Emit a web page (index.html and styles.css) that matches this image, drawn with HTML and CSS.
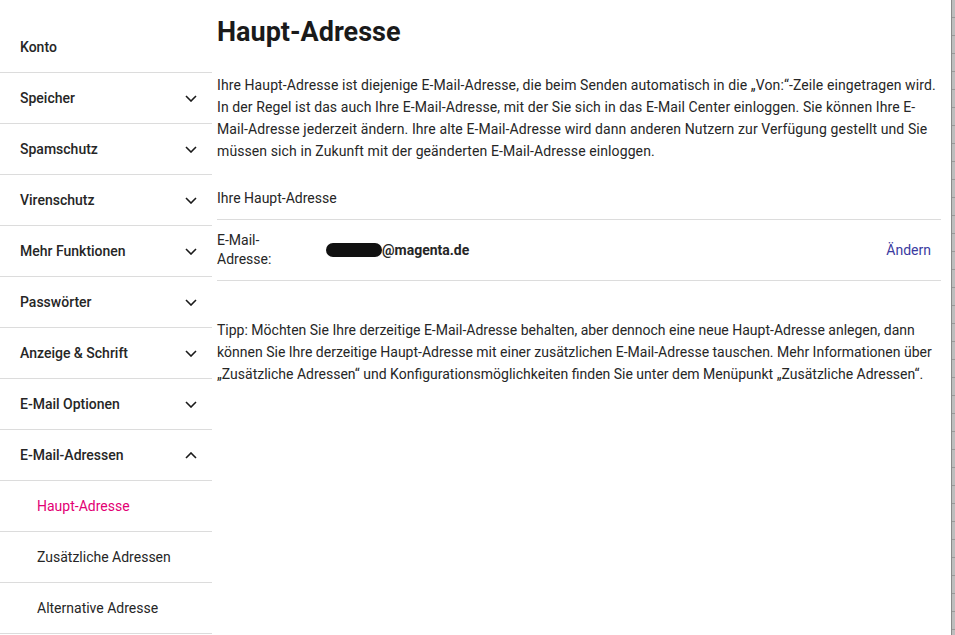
FILE: index.html
```html
<!DOCTYPE html>
<html lang="de">
<head>
    <meta charset="UTF-8">
    <meta name="viewport" content="width=device-width, initial-scale=1.0">
    <title>Haupt-Adresse</title>
    <link rel="stylesheet" href="styles.css">
</head>
<body>
    <div class="page">
        <nav class="sidebar">
            <div class="nav-item">Konto</div>
            <div class="nav-item">Speicher <svg class="chev" viewBox="0 0 12 7"><path d="M1 1l5 5 5-5"/></svg></div>
            <div class="nav-item">Spamschutz <svg class="chev" viewBox="0 0 12 7"><path d="M1 1l5 5 5-5"/></svg></div>
            <div class="nav-item">Virenschutz <svg class="chev" viewBox="0 0 12 7"><path d="M1 1l5 5 5-5"/></svg></div>
            <div class="nav-item">Mehr Funktionen <svg class="chev" viewBox="0 0 12 7"><path d="M1 1l5 5 5-5"/></svg></div>
            <div class="nav-item">Passwörter <svg class="chev" viewBox="0 0 12 7"><path d="M1 1l5 5 5-5"/></svg></div>
            <div class="nav-item">Anzeige &amp; Schrift <svg class="chev" viewBox="0 0 12 7"><path d="M1 1l5 5 5-5"/></svg></div>
            <div class="nav-item">E-Mail Optionen <svg class="chev" viewBox="0 0 12 7"><path d="M1 1l5 5 5-5"/></svg></div>
            <div class="nav-item">E-Mail-Adressen <svg class="chev" viewBox="0 0 12 7"><path d="M1 6l5-5 5 5"/></svg></div>
            <div class="nav-item sub active">Haupt-Adresse</div>
            <div class="nav-item sub">Zusätzliche Adressen</div>
            <div class="nav-item sub">Alternative Adresse</div>
        </nav>

        <main class="content">
            <h1>Haupt-Adresse</h1>
            <p class="intro">Ihre Haupt-Adresse ist diejenige E-Mail-Adresse, die beim Senden automatisch in die „Von:“-Zeile eingetragen wird. In der Regel ist das auch Ihre E-Mail-Adresse, mit der Sie sich in das E-Mail Center einloggen. Sie können Ihre E-Mail-Adresse jederzeit ändern. Ihre alte E-Mail-Adresse wird dann anderen Nutzern zur Verfügung gestellt und Sie müssen sich in Zukunft mit der geänderten E-Mail-Adresse einloggen.</p>

            <div class="section-label">Ihre Haupt-Adresse</div>
            <div class="address-row">
                <div class="address-label">E-Mail-<br>Adresse:</div>
                <div class="address-value"><span class="redacted"></span>@magenta.de</div>
                <a class="change-link" href="#">Ändern</a>
            </div>

            <p class="tip">Tipp: Möchten Sie Ihre derzeitige E-Mail-Adresse behalten, aber dennoch eine neue Haupt-Adresse anlegen, dann können Sie Ihre derzeitige Haupt-Adresse mit einer zusätzlichen E-Mail-Adresse tauschen. Mehr Informationen über „Zusätzliche Adressen“ und Konfigurationsmöglichkeiten finden Sie unter dem Menüpunkt „Zusätzliche Adressen“.</p>
        </main>

        <div class="scroll-strip"></div>
    </div>
</body>
</html>
```

FILE: styles.css
```css
body {
    font-family: Roboto, "Noto Sans", sans-serif;
    margin: 0;
    padding: 0;
    background-color: white;
    color: #262626;
    font-size: 14px;
}
.page {
    display: flex;
    height: 635px;
    overflow: hidden;
}
.sidebar {
    width: 212px;
    flex-shrink: 0;
    padding-top: 22px;
}
.nav-item {
    height: 50px;
    border-bottom: 1px solid #dcdcdc;
    display: flex;
    align-items: center;
    justify-content: space-between;
    padding: 0 15px 0 20px;
    font-weight: 500;
    font-size: 14px;
}
.nav-item.sub {
    padding-left: 37px;
    font-weight: 400;
}
.nav-item.active {
    color: #e20074;
}
.chev {
    width: 12px;
    height: 7px;
    fill: none;
    stroke: #1a1a1a;
    stroke-width: 1.6;
}
.content {
    flex: 1;
    padding: 0 10px 0 5px;
}
h1 {
    font-size: 27px;
    font-weight: 700;
    margin: 16px 0 26px;
    color: #1a1a1a;
}
.intro, .tip {
    line-height: 22px;
    margin: 0;
}
.intro {
    letter-spacing: 0.1px;
}
.section-label {
    margin-top: 25px;
    line-height: 22px;
    padding-bottom: 10px;
    border-bottom: 1px solid #dcdcdc;
}
.address-row {
    display: flex;
    align-items: center;
    height: 60px;
    border-bottom: 1px solid #dcdcdc;
    padding-right: 10px;
}
.address-label {
    width: 109px;
    line-height: 19px;
}
.address-value {
    flex: 1;
    font-weight: 700;
    display: flex;
    align-items: center;
}
.redacted {
    display: inline-block;
    width: 56px;
    height: 14px;
    background-color: #111;
    border-radius: 7px;
}
.change-link {
    color: #3a3aa0;
    text-decoration: none;
}
.tip {
    margin-top: 38px;
}
.scroll-strip {
    width: 3px;
    flex-shrink: 0;
    border-left: 1px solid #8a8a8a;
    background: repeating-linear-gradient(to bottom, #bdbdbd 0, #bdbdbd 17px, #9a9a9a 17px, #9a9a9a 18px);
}
```
